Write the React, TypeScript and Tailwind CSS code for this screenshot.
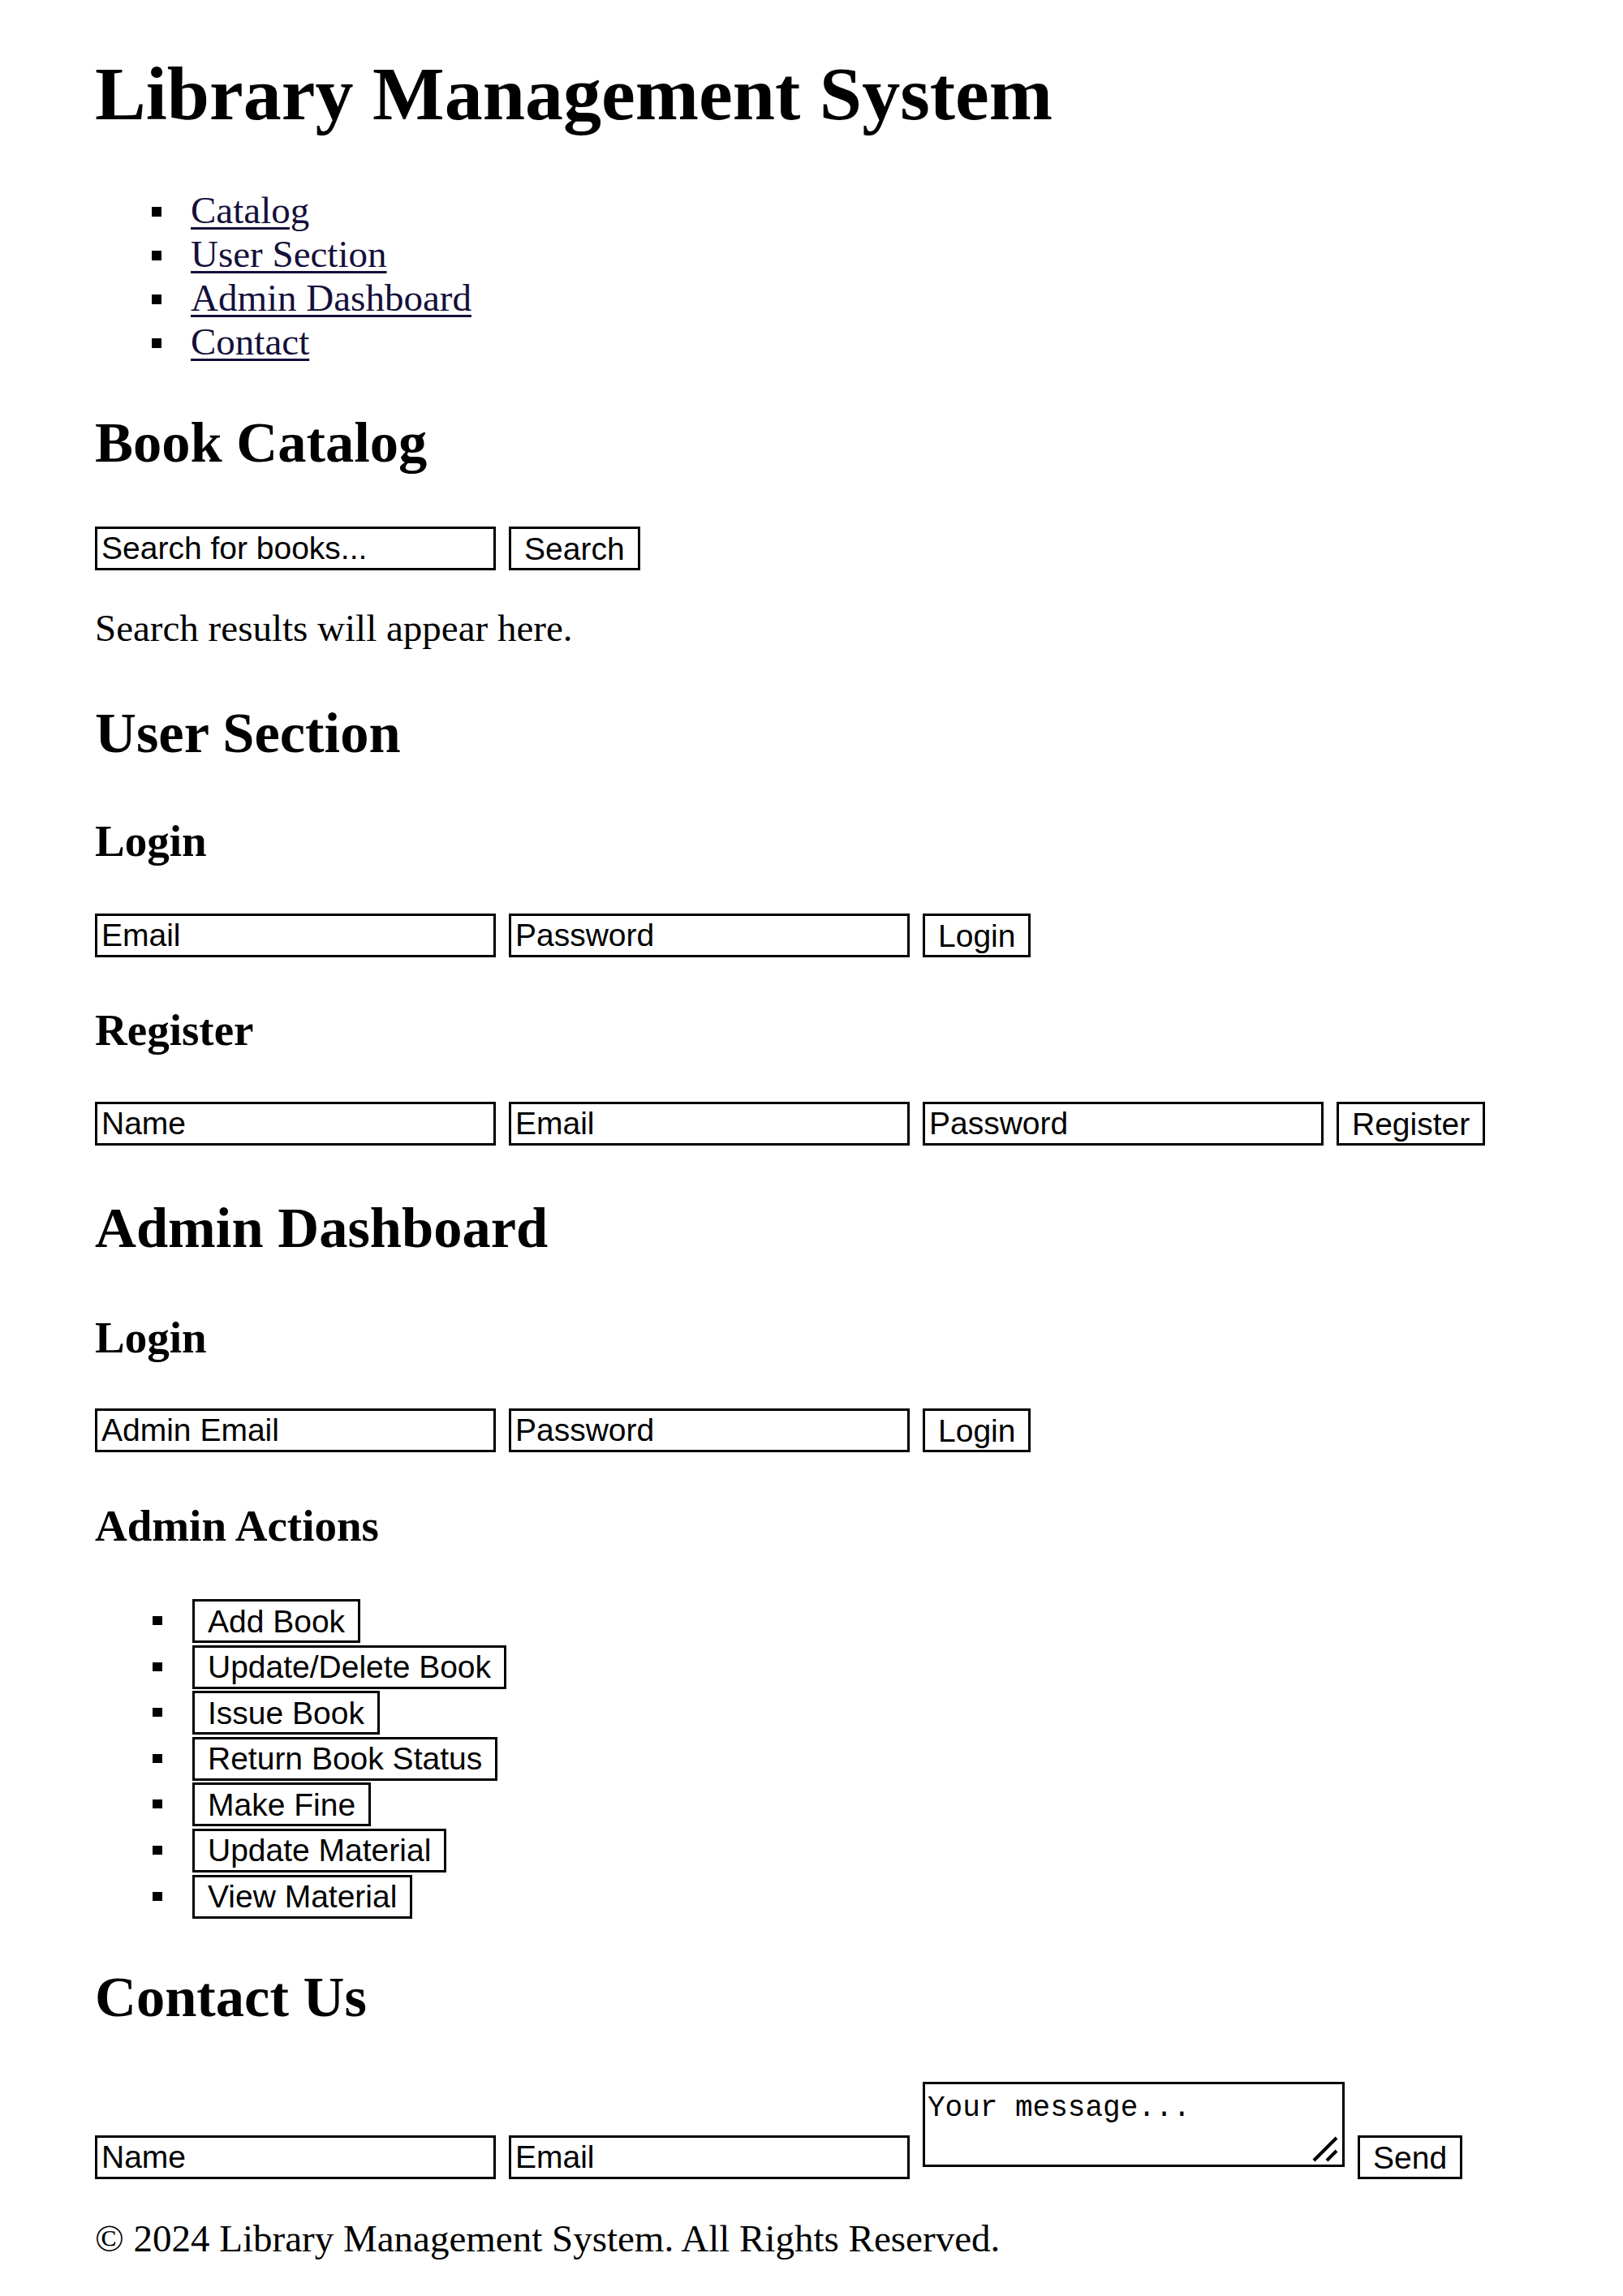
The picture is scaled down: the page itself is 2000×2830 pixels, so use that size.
import type { ReactNode } from "react";

const navLinks = [
  { href: "#catalog", label: "Catalog" },
  { href: "#user", label: "User Section" },
  { href: "#admin", label: "Admin Dashboard" },
  { href: "#contact", label: "Contact" },
];

const adminActions = [
  "Add Book",
  "Update/Delete Book",
  "Issue Book",
  "Return Book Status",
  "Make Fine",
  "Update Material",
  "View Material",
];

function Field({ placeholder, type = "text" }: { placeholder: string; type?: string }) {
  return (
    <input
      type={type}
      placeholder={placeholder}
      className="h-[54px] w-[494px] shrink-0 border-[3px] border-black bg-white px-[5px] font-['Liberation_Sans',Arial,sans-serif] text-[39px] text-black outline-none placeholder:text-black"
    />
  );
}

function Btn({ children }: { children: ReactNode }) {
  return (
    <button
      type="button"
      className="h-[54px] shrink-0 border-[3px] border-black bg-white px-[16px] font-['Liberation_Sans',Arial,sans-serif] text-[39px] leading-none text-black"
    >
      {children}
    </button>
  );
}

function Row({ children, className }: { children: ReactNode; className: string }) {
  return (
    <form className={"flex items-start gap-[16px] " + className} onSubmit={(e) => e.preventDefault()}>
      {children}
    </form>
  );
}

export default function App() {
  return (
    <div className="min-h-[2830px] bg-white pl-[117px] pt-[61px] font-['Liberation_Serif','Times_New_Roman',serif] text-black">
      <header>
        <h1 className="text-[94px] font-bold leading-[108px]">Library Management System</h1>
        <nav>
          <ul className="mt-[63px]">
            {navLinks.map((l) => (
              <li key={l.href} className="flex h-[54px] items-start text-[47px] leading-[54px]">
                <span className="ml-[70px] mt-[23px] h-[12px] w-[12px] shrink-0 bg-black" />
                <a
                  href={l.href}
                  className="ml-[36px] text-[#14103a] underline decoration-[3px] underline-offset-[5px]"
                >
                  {l.label}
                </a>
              </li>
            ))}
          </ul>
        </nav>
      </header>

      <section id="catalog">
        <h2 className="mt-[57px] text-[70.5px] font-bold leading-[81px]">Book Catalog</h2>
        <Row className="mt-[63px]">
          <Field placeholder="Search for books..." />
          <Btn>Search</Btn>
        </Row>
        <p className="mt-[44px] text-[47px] leading-[54px]">Search results will appear here.</p>
      </section>

      <section id="user">
        <h2 className="mt-[62px] text-[70.5px] font-bold leading-[81px]">User Section</h2>
        <h3 className="mt-[61px] text-[55px] font-bold leading-[63px]">Login</h3>
        <Row className="mt-[58px]">
          <Field placeholder="Email" type="email" />
          <Field placeholder="Password" type="password" />
          <Btn>Login</Btn>
        </Row>
        <h3 className="mt-[58px] text-[55px] font-bold leading-[63px]">Register</h3>
        <Row className="mt-[57px]">
          <Field placeholder="Name" />
          <Field placeholder="Email" type="email" />
          <Field placeholder="Password" type="password" />
          <Btn>Register</Btn>
        </Row>
      </section>

      <section id="admin">
        <h2 className="mt-[61px] text-[70.5px] font-bold leading-[81px]">Admin Dashboard</h2>
        <h3 className="mt-[63px] text-[55px] font-bold leading-[63px]">Login</h3>
        <Row className="mt-[56px]">
          <Field placeholder="Admin Email" type="email" />
          <Field placeholder="Password" type="password" />
          <Btn>Login</Btn>
        </Row>
        <h3 className="mt-[59px] text-[55px] font-bold leading-[63px]">Admin Actions</h3>
        <ul className="mt-[59px]">
          {adminActions.map((a) => (
            <li key={a} className="flex h-[56.6px] items-start">
              <span className="ml-[71px] mt-[21px] h-[11px] w-[12px] shrink-0 bg-black" />
              <span className="ml-[37px]">
                <Btn>{a}</Btn>
              </span>
            </li>
          ))}
        </ul>
      </section>

      <section id="contact">
        <h2 className="mt-[54px] text-[70.5px] font-bold leading-[81px]">Contact Us</h2>
        <Row className="mt-[64px]">
          <span className="mt-[66px] flex gap-[16px]">
            <Field placeholder="Name" />
            <Field placeholder="Email" type="email" />
          </span>
          <span className="relative shrink-0">
            <textarea
              placeholder="Your message..."
              className="block h-[105px] w-[520px] resize-none border-[3px] border-black bg-white px-[3px] pt-[9px] font-['Liberation_Mono','Courier_New',monospace] text-[36px] leading-[42px] text-black outline-none placeholder:text-black"
            />
            <svg
              className="pointer-events-none absolute bottom-[6px] right-[8px] h-[32px] w-[32px]"
              viewBox="0 0 32 32"
              fill="none"
              stroke="black"
              strokeWidth="4"
            >
              <line x1="2" y1="30" x2="30" y2="2" />
              <line x1="18" y1="30" x2="30" y2="18" />
            </svg>
          </span>
          <span className="mt-[66px]">
            <Btn>Send</Btn>
          </span>
        </Row>
      </section>

      <footer>
        <p className="mt-[46px] text-[47px] leading-[54px]">© 2024 Library Management System. All Rights Reserved.</p>
      </footer>
    </div>
  );
}
